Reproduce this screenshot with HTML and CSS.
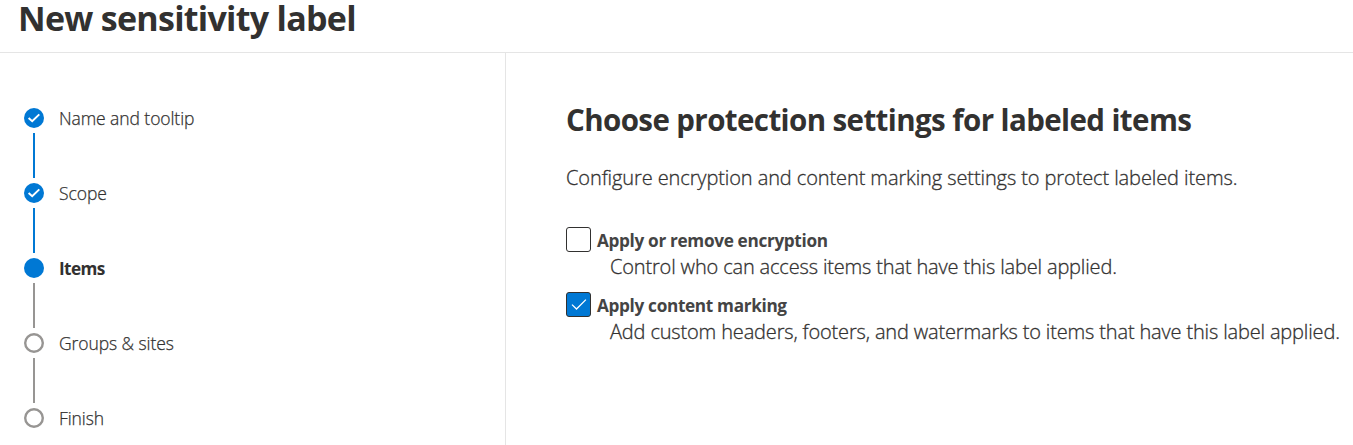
FILE: index.html
```html
<!DOCTYPE html>
<html lang="en">
<head>
<meta charset="utf-8">
<title>New sensitivity label</title>
<link rel="stylesheet" href="styles.css">
</head>
<body>
<header class="header"><h1 class="title">New sensitivity label</h1></header>
<div class="layout">
  <nav class="sidebar">
    <ol class="steps">
      <li class="step done">
        <svg class="dot" viewBox="0 0 20 20"><circle cx="10" cy="10" r="10" fill="#0078d4"/><path d="M4.6 10 8.2 13.2 15.3 6.4" fill="none" stroke="#fff" stroke-width="2"/></svg>
        <span class="step-name">Name and tooltip</span>
      </li>
      <li class="step done">
        <svg class="dot" viewBox="0 0 20 20"><circle cx="10" cy="10" r="10" fill="#0078d4"/><path d="M4.6 10 8.2 13.2 15.3 6.4" fill="none" stroke="#fff" stroke-width="2"/></svg>
        <span class="step-name">Scope</span>
      </li>
      <li class="step current">
        <svg class="dot" viewBox="0 0 20 20"><circle cx="10" cy="10" r="10" fill="#0078d4"/></svg>
        <span class="step-name">Items</span>
      </li>
      <li class="step">
        <svg class="dot" viewBox="0 0 20 20"><circle cx="10" cy="10" r="8.8" fill="#fff" stroke="#979593" stroke-width="2.4"/></svg>
        <span class="step-name">Groups &amp; sites</span>
      </li>
      <li class="step">
        <svg class="dot" viewBox="0 0 20 20"><circle cx="10" cy="10" r="8.8" fill="#fff" stroke="#979593" stroke-width="2.4"/></svg>
        <span class="step-name">Finish</span>
      </li>
    </ol>
  </nav>
  <main class="content">
    <h2 class="heading">Choose protection settings for labeled items</h2>
    <p class="intro">Configure encryption and content marking settings to protect labeled items.</p>
    <div class="option">
      <span class="box" role="checkbox" aria-checked="false"></span>
      <div class="option-text">
        <div class="option-name">Apply or remove encryption</div>
        <div class="option-desc">Control who can access items that have this label applied.</div>
      </div>
    </div>
    <div class="option">
      <span class="box checked" role="checkbox" aria-checked="true"><svg class="tick" viewBox="0 0 23 23"><path d="M5 11.6 9.5 16 18.9 6.6" fill="none" stroke="#fff" stroke-width="1.3"/></svg></span>
      <div class="option-text">
        <div class="option-name">Apply content marking</div>
        <div class="option-desc">Add custom headers, footers, and watermarks to items that have this label applied.</div>
      </div>
    </div>
  </main>
</div>
</body>
</html>
```

FILE: styles.css
```css
* { box-sizing: border-box; }
body {
  margin: 0;
  height: 445px;
  overflow: hidden;
  display: flex;
  flex-direction: column;
  background: #fff;
  color: #323130;
  font-family: "Open Sans", "Noto Sans", sans-serif;
  white-space: nowrap;
}
h1, h2, p, ol { margin: 0; padding: 0; }
.header {
  flex: none;
  height: 53px;
  padding-left: 18px;
  border-bottom: 1px solid #e5e5e5;
}
.title { font-size: 34px; line-height: 37px; font-weight: 700; letter-spacing: -0.72px; }
.layout { flex: 1; min-height: 0; display: flex; }
.sidebar {
  flex: none;
  width: 506px;
  padding: 55px 0 0 24px;
  border-right: 1px solid #e5e5e5;
}
.steps { list-style: none; }
.step {
  height: 75px;
  display: grid;
  grid-template-columns: 20px 1fr;
  grid-template-rows: 20px 45px;
  gap: 5px 15px;
}
.step:last-child { height: 20px; grid-template-rows: 20px; }
.step:not(:last-child)::after {
  content: "";
  width: 2px;
  height: 45px;
  justify-self: center;
  background: #979593;
}
.step.done::after { background: #0078d4; }
.dot { width: 20px; height: 20px; display: block; }
.step-name {
  justify-self: start;
  font-size: 17.5px;
  line-height: 21px;
  font-weight: 300;
  letter-spacing: -0.08px;
  -webkit-text-stroke: 0.25px currentColor;
}
.current .step-name { font-weight: 700; font-size: 17.2px; letter-spacing: -0.6px; -webkit-text-stroke: 0; }
.content { flex: none; padding: 49px 0 0 60px; }
.heading { font-size: 29.5px; line-height: 36px; font-weight: 700; letter-spacing: -0.6px; }
.intro {
  margin-top: 26px;
  font-size: 20px;
  line-height: 28px;
  font-weight: 300;
  letter-spacing: -0.1px;
  -webkit-text-stroke: 0.3px currentColor;
}
.option { display: flex; gap: 6px; height: 65px; }
.intro + .option { margin-top: 35px; }
.box {
  flex: none;
  width: 25px;
  height: 25px;
  border: 1px solid #323130;
  border-radius: 3px;
}
.box.checked { background: #0078d4; }
.tick { display: block; width: 23px; height: 23px; }
.option-name { font-size: 17.2px; line-height: 27px; font-weight: 700; color: #444; letter-spacing: -0.33px; }
.option-desc {
  padding-left: 13px;
  font-size: 20px;
  line-height: 26px;
  font-weight: 300;
  letter-spacing: -0.16px;
  -webkit-text-stroke: 0.3px currentColor;
}
```
